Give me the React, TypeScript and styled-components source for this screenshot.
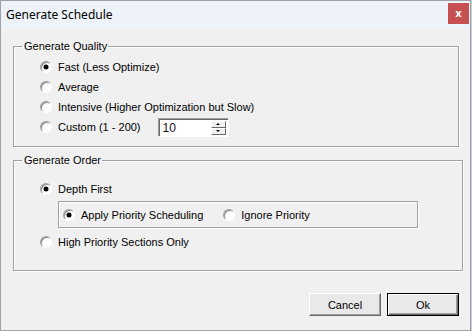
import React from 'react';
import styled, { createGlobalStyle } from 'styled-components';

const GlobalStyle = createGlobalStyle`
  html, body {
    margin: 0;
    padding: 0;
    background: #c9ccd1;
  }
  * {
    box-sizing: border-box;
  }
`;

const Radio: React.FC<{ checked?: boolean; label: string }> = ({ checked, label }) => (
  <RadioRow>
    <RadioCircle $checked={checked} />
    <RadioLabel>{label}</RadioLabel>
  </RadioRow>
);

const App: React.FC = () => {
  const [custom, setCustom] = React.useState('10');

  return (
    <>
      <GlobalStyle />
      <Window>
        <TitleBar>
          <Title>Generate Schedule</Title>
          <CloseButton>x</CloseButton>
        </TitleBar>
        <Body>
          <Group $width={446}>
            <Legend>Generate Quality</Legend>
            <Radio checked label="Fast (Less Optimize)" />
            <Radio label="Average" />
            <Radio label="Intensive (Higher Optimization but Slow)" />
            <CustomRow>
              <Radio label="Custom (1 - 200)" />
              <SpinBox>
                <SpinInput value={custom} onChange={(e) => setCustom(e.target.value)} />
                <SpinButtons>
                  <SpinButton>
                    <Arrow $up />
                  </SpinButton>
                  <SpinButton>
                    <Arrow />
                  </SpinButton>
                </SpinButtons>
              </SpinBox>
            </CustomRow>
          </Group>

          <Group $width={450} $second>
            <Legend>Generate Order</Legend>
            <Radio checked label="Depth First" />
            <SubBox>
              <Radio checked label="Apply Priority Scheduling" />
              <Radio label="Ignore Priority" />
            </SubBox>
            <Radio label="High Priority Sections Only" />
          </Group>

          <Footer>
            <Button>Cancel</Button>
            <Button $default>Ok</Button>
          </Footer>
        </Body>
      </Window>
    </>
  );
};

const Window = styled.div`
  width: 471px;
  height: 331px;
  border: 1px solid #9ea3aa;
  background-color: #f0f0f0;
  display: flex;
  flex-direction: column;
  font-family: 'Liberation Sans', Arial, sans-serif;
  font-size: 11px;
  color: #000;
`;

const TitleBar = styled.div`
  height: 28px;
  background-color: #eef2f9;
  display: flex;
  align-items: flex-start;
  justify-content: space-between;
  padding-left: 5px;
`;

const Title = styled.div`
  font-family: 'Noto Sans', sans-serif;
  font-size: 12px;
  line-height: 28px;
  color: #000;
`;

const CloseButton = styled.div`
  width: 21px;
  height: 21px;
  margin-top: 2px;
  margin-right: 1px;
  background-color: #c75050;
  color: #fff;
  font-family: 'DejaVu Sans', sans-serif;
  font-weight: bold;
  font-size: 10px;
  display: flex;
  align-items: center;
  justify-content: center;
`;

const Body = styled.div`
  flex: 1;
  padding: 10px 11px 0 12px;
  display: flex;
  flex-direction: column;
`;

const Group = styled.fieldset<{ $width: number; $second?: boolean }>`
  width: ${(p) => p.$width}px;
  margin: ${(p) => (p.$second ? '6px' : '0')} 0 0 0;
  padding: ${(p) => (p.$second ? '12px 0 18px 26px' : '4px 0 9px 26px')};
  border: 1px solid #a0a0a0;
  box-shadow: 1px 1px 0 #fff, inset 1px 1px 0 #fff;
  display: flex;
  flex-direction: column;
  min-width: 0;
`;

const Legend = styled.legend`
  margin-left: -18px;
  padding: 0 1px 0 2px;
  line-height: 14px;
  font-size: 11px;
`;

const RadioRow = styled.div`
  height: 20px;
  display: flex;
  align-items: center;
  gap: 6px;
`;

const RadioCircle = styled.span<{ $checked?: boolean }>`
  width: 12px;
  height: 12px;
  border-radius: 50%;
  border: 1px solid;
  border-color: #a0a0a0 #fdfdfd #fdfdfd #a0a0a0;
  background-color: #fff;
  box-shadow: inset 1px 1px 0 #8a8a8a;
  display: flex;
  align-items: center;
  justify-content: center;
  flex-shrink: 0;

  &::after {
    content: '';
    display: ${(p) => (p.$checked ? 'block' : 'none')};
    width: 4px;
    height: 4px;
    border-radius: 50%;
    background-color: #000;
    box-shadow: 0 0 0 0.5px #000;
  }
`;

const RadioLabel = styled.span`
  line-height: 14px;
  white-space: nowrap;
`;

const CustomRow = styled.div`
  display: flex;
  align-items: center;
  gap: 17px;
`;

const SpinBox = styled.div`
  width: 71px;
  height: 19px;
  border: 1px solid;
  border-color: #a0a0a0 #fff #fff #a0a0a0;
  box-shadow: inset 1px 1px 0 #696969;
  background-color: #fff;
  display: flex;
  padding: 2px 2px 1px 2px;
`;

const SpinInput = styled.input`
  flex: 1;
  min-width: 0;
  border: none;
  outline: none;
  padding: 0 0 0 2px;
  font-family: 'Liberation Sans', Arial, sans-serif;
  font-size: 12px;
  color: #1a0a1a;
  background: transparent;
`;

const SpinButtons = styled.div`
  width: 15px;
  display: flex;
  flex-direction: column;
`;

const SpinButton = styled.div`
  flex: 1;
  background-color: #f0f0f0;
  border: 1px solid;
  border-color: #fff #696969 #696969 #fff;
  display: flex;
  align-items: center;
  justify-content: center;
`;

const Arrow = styled.span<{ $up?: boolean }>`
  width: 0;
  height: 0;
  border-left: 2px solid transparent;
  border-right: 2px solid transparent;
  ${(p) => (p.$up ? 'border-bottom: 2px solid #000;' : 'border-top: 2px solid #000;')}
`;

const SubBox = styled.div`
  width: 360px;
  height: 27px;
  margin: 2px 0 4px 18px;
  border: 1px solid #a0a0a0;
  box-shadow: 1px 1px 0 #fff, inset 1px 1px 0 #fff;
  display: flex;
  align-items: center;
  padding-left: 4px;
  gap: 20px;
`;

const Footer = styled.div`
  display: flex;
  justify-content: flex-end;
  gap: 6px;
  margin-top: 22px;
`;

const Button = styled.button<{ $default?: boolean }>`
  width: 72px;
  height: 23px;
  font-family: 'Liberation Sans', Arial, sans-serif;
  font-size: 11px;
  color: #000;
  background-color: #e9e9e9;
  border: 1px solid;
  border-color: ${(p) => (p.$default ? '#000' : '#fff #696969 #696969 #fff')};
  box-shadow: ${(p) =>
    p.$default
      ? 'inset 1px 1px 0 #fff, inset -1px -1px 0 #696969, inset -2px -2px 0 #a0a0a0'
      : 'inset -1px -1px 0 #a0a0a0'};
  padding: 0;
`;

export default App;
